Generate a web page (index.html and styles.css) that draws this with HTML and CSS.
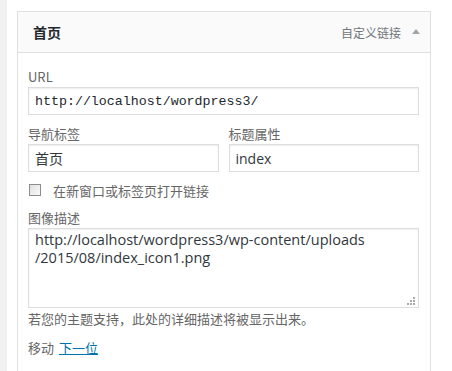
FILE: index.html
```html
<!DOCTYPE html>
<html lang="zh-CN">
<head>
  <meta charset="UTF-8">
  <title>菜单项</title>
  <link rel="stylesheet" href="styles.css">
</head>
<body>

  <div class="sidebar-edge"></div>

  <div class="main">
    <div class="menu-item">
      <div class="item-bar">
        <span class="item-title">首页</span>
        <span class="item-controls">
          <span class="item-type">自定义链接</span>
          <span class="item-arrow"></span>
        </span>
      </div>

      <div class="item-settings">
        <div class="field">
          <label class="field-label">URL</label>
          <input class="field-input mono" type="text" value="http://localhost/wordpress3/">
        </div>

        <div class="field-row">
          <div class="field">
            <label class="field-label">导航标签</label>
            <input class="field-input" type="text" value="首页">
          </div>
          <div class="field">
            <label class="field-label">标题属性</label>
            <input class="field-input" type="text" value="index">
          </div>
        </div>

        <label class="check-row">
          <span class="check-box"></span>
          <span>在新窗口或标签页打开链接</span>
        </label>

        <div class="field">
          <label class="field-label">图像描述</label>
          <div class="textarea-wrap">
            <textarea class="field-textarea">http://localhost/wordpress3/wp-content/uploads
/2015/08/index_icon1.png</textarea>
            <svg class="grip" width="8" height="8" viewBox="0 0 8 8">
              <rect x="6" y="0" width="2" height="2"/>
              <rect x="3" y="3" width="2" height="2"/>
              <rect x="6" y="3" width="2" height="2"/>
              <rect x="0" y="6" width="2" height="2"/>
              <rect x="3" y="6" width="2" height="2"/>
              <rect x="6" y="6" width="2" height="2"/>
            </svg>
          </div>
        </div>
        <p class="description">若您的主题支持，此处的详细描述将被显示出来。</p>

        <p class="move">移动 <a href="#">下一位</a></p>
      </div>
    </div>
  </div>

</body>
</html>
```

FILE: styles.css
```css
body {
  margin: 0;
  background: #fff;
  display: flex;
  height: 100vh;
  overflow: hidden;
  font-family: "Open Sans", "Noto Sans CJK SC", sans-serif;
  color: #555;
}

.sidebar-edge {
  width: 7px;
  background: #f1f1f1;
  flex-shrink: 0;
}

.main {
  padding: 11px 0 0 10px;
}

.menu-item {
  width: 412px;
  border: 1px solid #dfdfdf;
  border-bottom: none;
  height: 359px;
}

.item-bar {
  height: 40px;
  background: #fafafa;
  border-bottom: 1px solid #dfdfdf;
  display: flex;
  align-items: center;
  justify-content: space-between;
  padding: 0 10px 0 15px;
}

.item-title {
  font-family: "Noto Sans CJK SC", sans-serif;
  font-size: 14px;
  font-weight: bold;
  color: #23282d;
}

.item-controls {
  display: flex;
  align-items: center;
  gap: 11px;
}

.item-type {
  font-family: "Noto Sans CJK SC", sans-serif;
  font-size: 12px;
  color: #72777c;
}

.item-arrow {
  width: 0;
  height: 0;
  border-left: 4px solid transparent;
  border-right: 4px solid transparent;
  border-bottom: 5px solid #a0a5aa;
  margin-top: -2px;
}

.item-settings {
  padding: 14px 11px 0 10px;
}

.field {
  display: flex;
  flex-direction: column;
}

.field-label {
  font-family: "Noto Sans CJK SC", sans-serif;
  font-size: 13px;
  line-height: 20px;
  color: #666;
}

.field-row {
  display: flex;
  gap: 10px;
  margin-top: 9px;
}

.field-row .field {
  flex: 1;
}

.field-input {
  box-sizing: border-box;
  height: 28px;
  width: 100%;
  margin: 0;
  border: 1px solid #ddd;
  box-shadow: inset 0 1px 2px rgba(0, 0, 0, 0.07);
  padding: 0 6px;
  font-family: "Open Sans", "Noto Sans CJK SC", sans-serif;
  font-size: 14px;
  color: #32373c;
  background: #fff;
  outline: none;
}

.field-input.mono {
  font-family: "Liberation Mono", monospace;
  font-size: 13.3px;
  color: #23282d;
}

.check-row {
  display: flex;
  align-items: center;
  gap: 12px;
  margin: 11px 0 0 1px;
  font-family: "Noto Sans CJK SC", sans-serif;
  font-size: 13px;
  color: #666;
  height: 14px;
}

.check-box {
  box-sizing: border-box;
  width: 12px;
  height: 12px;
  border: 1px solid #8d8d8d;
  background: linear-gradient(135deg, #e0e0e0, #fafafa);
}

.check-row + .field {
  margin-top: 11px;
}

.textarea-wrap {
  position: relative;
}

.field-textarea {
  box-sizing: border-box;
  width: 100%;
  height: 80px;
  margin: 0;
  border: 1px solid #ddd;
  box-shadow: inset 0 1px 2px rgba(0, 0, 0, 0.07);
  padding: 2px 6px;
  font-family: "Open Sans", "Noto Sans CJK SC", sans-serif;
  font-size: 14.5px;
  line-height: 18px;
  color: #32373c;
  resize: none;
  outline: none;
  display: block;
}

.grip {
  position: absolute;
  right: 4px;
  bottom: 3px;
  fill: #aaa;
}

.description {
  margin: 1px 0 0;
  font-family: "Noto Sans CJK SC", sans-serif;
  font-size: 13px;
  line-height: 20px;
  color: #666;
}

.move {
  margin: 9px 0 0;
  font-family: "Noto Sans CJK SC", sans-serif;
  font-size: 13px;
  line-height: 20px;
  color: #666;
}

.move a {
  color: #0073aa;
  margin-left: 2px;
}
```
